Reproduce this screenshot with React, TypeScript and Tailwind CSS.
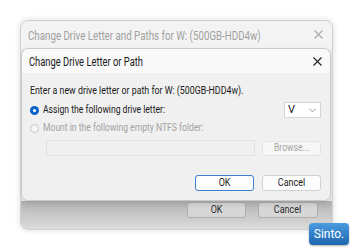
import React from "react";

function XIcon({ color }: { color: string }) {
  return (
    <svg width="9" height="9" viewBox="0 0 9 9" className="shrink-0">
      <path d="M0.5 0.5 L8.5 8.5 M8.5 0.5 L0.5 8.5" stroke={color} strokeWidth="1.1" fill="none" />
    </svg>
  );
}

function T({ children, className = "" }: { children: React.ReactNode; className?: string }) {
  return (
    <span className={"inline-block whitespace-nowrap origin-left scale-x-[0.78] " + className}>{children}</span>
  );
}

function C({ children, className = "" }: { children: React.ReactNode; className?: string }) {
  return (
    <span className={"inline-block whitespace-nowrap origin-center scale-x-[0.78] " + className}>{children}</span>
  );
}

export default function App() {
  return (
    <div
      className="relative w-[352px] h-[250px] bg-white overflow-hidden"
      style={{ fontFamily: 'Roboto, "Noto Sans", sans-serif' }}
    >
      <div className="ml-[20px] mt-[20px] w-[313px] h-[210px] rounded-[8px] border border-[#cfcfcf] bg-[#f0f0f0] shadow-[0_0_4px_2px_rgba(0,0,0,0.08)] flex flex-col overflow-hidden">
        {/* outer title bar */}
        <div className="h-[27px] flex items-center pl-[7px] pr-[9px] bg-[#f3f3f3]">
          <div className="flex-1 min-w-0">
            <T className="text-[12.5px] text-[#a0a0a0]">Change Drive Letter and Paths for W: (500GB-HDD4w)</T>
          </div>
          <XIcon color="#a8a8a8" />
        </div>
        {/* inner dialog */}
        <div className="w-[310px] h-[153px] rounded-[7px] border border-[#c9c9c9] bg-[#f0f0f0] flex flex-col relative z-10 shadow-[0_3px_6px_rgba(0,0,0,0.12)]">
          <div className="h-[24px] flex items-center pl-[7px] pr-[8px] bg-[#f9f9f9] rounded-t-[7px]">
            <div className="flex-1 min-w-0">
              <T className="text-[12px] text-[#1a1a1a]">Change Drive Letter or Path</T>
            </div>
            <XIcon color="#222" />
          </div>
          <div className="flex flex-col pl-[8px] pr-[9px] pt-[8px]">
            <div className="leading-[16px]">
              <T className="text-[11.3px] text-[#1a1a1a]">Enter a new drive letter or path for W: (500GB-HDD4w).</T>
            </div>
            <div className="flex items-center mt-[2px] h-[18px]">
              <div className="flex-1 min-w-0 flex items-center gap-[4px]">
                <div className="w-[9px] h-[9px] shrink-0 rounded-full bg-[#0a64c8] flex items-center justify-center">
                  <div className="w-[3px] h-[3px] rounded-full bg-white" />
                </div>
                <T className="text-[11px] text-[#1a1a1a]">Assign the following drive letter:</T>
              </div>
              <div className="w-[37px] h-[16px] shrink-0 bg-white border border-[#d6d6d6] flex items-center justify-between pl-[3px] pr-[4px]">
                <span className="text-[11px] text-[#1a1a1a]">V</span>
                <svg width="7" height="5" viewBox="0 0 7 5">
                  <path d="M0.5 0.8 L3.5 3.8 L6.5 0.8" stroke="#888" strokeWidth="0.9" fill="none" />
                </svg>
              </div>
            </div>
            <div className="flex items-center gap-[4px] h-[18px]">
              <div className="w-[9px] h-[9px] shrink-0 rounded-full border border-[#c8c8c8] bg-[#f4f4f4]" />
              <T className="text-[11px] text-[#a2a2a2]">Mount in the following empty NTFS folder:</T>
            </div>
            <div className="flex items-center justify-between mt-[3px] pl-[16px]">
              <div className="w-[209px] h-[16px] border border-[#e2e2e2] bg-[#f0f0f0]" />
              <div className="w-[59px] h-[15px] rounded-[3px] border border-[#e4e4e4] bg-[#f6f6f6] flex items-center justify-center">
                <C className="text-[11px] text-[#a6a6a6]">Browse...</C>
              </div>
            </div>
            <div className="flex justify-end gap-[8px] mt-[19px]">
              <div className="w-[59px] h-[16px] rounded-[3px] border border-[#3d7fd0] bg-[#fdfdfd] flex items-center justify-center">
                <C className="text-[11.5px] text-[#1a1a1a]">OK</C>
              </div>
              <div className="w-[59px] h-[16px] rounded-[3px] border border-[#d0d0d0] bg-[#fdfdfd] flex items-center justify-center">
                <C className="text-[11.5px] text-[#1a1a1a]">Cancel</C>
              </div>
            </div>
          </div>
        </div>
        {/* outer bottom */}
        <div className="flex-1 bg-gradient-to-b from-[#b4b4b4] to-[#dcdcdc] flex justify-end items-start gap-[12px] pr-[14px] pt-[1px]">
          <div className="w-[59px] h-[16px] rounded-[3px] border border-[#b0b0b0] bg-[#d6d6d6] flex items-center justify-center">
            <C className="text-[11.5px] text-[#2a2a2a]">OK</C>
          </div>
          <div className="w-[60px] h-[16px] rounded-[3px] border border-[#b0b0b0] bg-[#d6d6d6] flex items-center justify-center">
            <C className="text-[11.5px] text-[#2a2a2a]">Cancel</C>
          </div>
        </div>
      </div>

      {/* red arrow */}
      <svg className="absolute left-[212px] top-[104px]" width="24" height="60" viewBox="0 0 24 60">
        <rect x="9" y="0" width="5" height="32" fill="#f40000" />
        <path d="M2 28 L21 28 L12 58 Z" fill="#f40000" />
      </svg>

      {/* Sinto badge */}
      <div className="absolute left-[309px] top-[223px] w-[40px] h-[22px] rounded-[4px] bg-gradient-to-b from-[#4a9be0] to-[#1d66b0] flex items-center justify-center text-white text-[12px] shadow-[0_1px_2px_rgba(0,0,0,0.3)]">
        Sinto.
      </div>
    </div>
  );
}
